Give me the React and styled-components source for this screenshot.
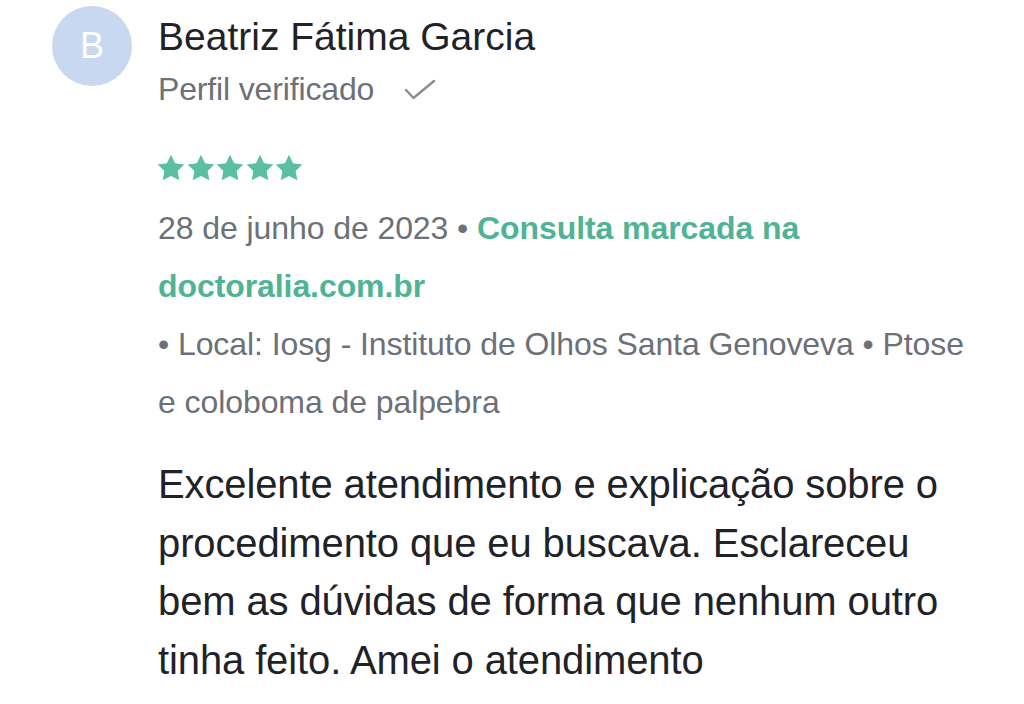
import React from "react";
import styled, { createGlobalStyle } from "styled-components";

const GlobalStyle = createGlobalStyle`
  html, body {
    margin: 0;
    padding: 0;
    background: #ffffff;
  }
  body {
    font-family: "Liberation Sans", Arial, sans-serif;
  }
`;

const Star = () => (
  <svg width="28" height="27" viewBox="0 0 24 23">
    <path
      d="M12 0.6l3.5 7.2 7.9 1.1-5.7 5.6 1.4 7.9L12 18.7l-7.1 3.7 1.4-7.9L0.6 8.9l7.9-1.1z"
      fill="#5bbfa3"
    />
  </svg>
);

const Check = () => (
  <svg width="32" height="22" viewBox="0 0 32 22">
    <path
      d="M2 11l7.5 8L30 2"
      fill="none"
      stroke="#8a8d92"
      strokeWidth="2.4"
      strokeLinecap="round"
      strokeLinejoin="round"
    />
  </svg>
);

const App = () => {
  return (
    <>
      <GlobalStyle />
      <Review>
        <Avatar>B</Avatar>
        <Content>
          <Name>Beatriz Fátima Garcia</Name>
          <Verified>
            Perfil verificado
            <Check />
          </Verified>
          <Stars>
            {[0, 1, 2, 3, 4].map((i) => (
              <Star key={i} />
            ))}
          </Stars>
          <Meta>
            28 de junho de 2023 • <Booked>Consulta marcada na doctoralia.com.br</Booked>
            <br />• Local: Iosg - Instituto de Olhos Santa Genoveva • Ptose e coloboma de palpebra
          </Meta>
          <Body>
            Excelente atendimento e explicação sobre o procedimento que eu buscava.
            Esclareceu bem as dúvidas de forma que nenhum outro tinha feito. Amei o
            atendimento
          </Body>
        </Content>
      </Review>
    </>
  );
};

export default App;

const Review = styled.div`
  display: flex;
  flex-direction: row;
  align-items: flex-start;
  gap: 26px;
  padding: 6px 0 0 52px;
  width: 1024px;
  box-sizing: border-box;
`;

const Avatar = styled.div`
  flex: 0 0 80px;
  width: 80px;
  height: 80px;
  border-radius: 50%;
  background: #c9d8f1;
  color: #ffffff;
  display: flex;
  align-items: center;
  justify-content: center;
  font-size: 36px;
  line-height: 1;
`;

const Content = styled.div`
  display: flex;
  flex-direction: column;
  width: 822px;
  padding-top: 6px;
`;

const Name = styled.h2`
  margin: 0;
  font-weight: 400;
  font-size: 39px;
  line-height: 50px;
  color: #1f2328;
`;

const Verified = styled.div`
  display: flex;
  align-items: center;
  gap: 30px;
  margin-top: 5px;
  font-size: 32px;
  line-height: 44px;
  letter-spacing: -0.15px;
  color: #6c7078;
  svg {
    margin-top: 2px;
  }
`;

const Stars = styled.div`
  display: flex;
  gap: 1.5px;
  margin-top: 43px;
  margin-left: -1px;
  height: 28px;
`;

const Meta = styled.p`
  margin: 17px 0 0;
  font-size: 32px;
  line-height: 58px;
  letter-spacing: -0.08px;
  color: #6c7078;
`;

const Booked = styled.span`
  font-weight: 700;
  color: #4fb394;
`;

const Body = styled.p`
  margin: 24px 0 0;
  max-width: 800px;
  font-size: 40px;
  line-height: 58.5px;
  letter-spacing: -0.12px;
  color: #1f2328;
`;
